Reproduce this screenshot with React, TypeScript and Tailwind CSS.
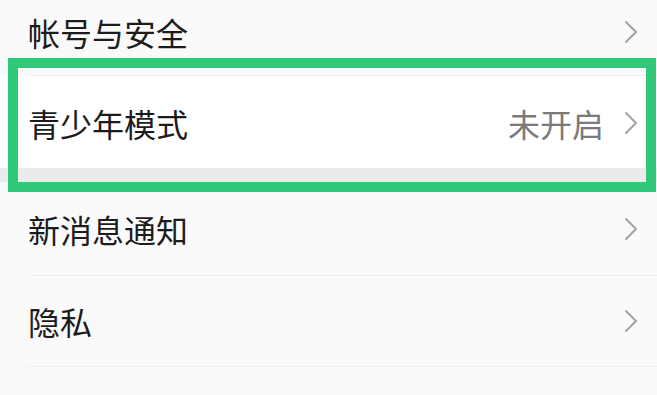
import React from "react";

const font = { fontFamily: '"Noto Sans CJK SC", "Noto Sans", sans-serif' };

function Chevron() {
  return (
    <svg width="14" height="24" viewBox="0 0 14 24" className="shrink-0">
      <path d="M2 2 L12 12 L2 22" fill="none" stroke="#a3a3a3" strokeWidth="2" strokeLinecap="round" strokeLinejoin="round" />
    </svg>
  );
}

function Row({ label, value, h, pad, divider, bg }: { label: string; value?: string; h: string; pad?: string; divider?: boolean; bg: string }) {
  return (
    <div className={`relative flex items-center pl-[28px] pr-[19px] ${h} ${bg}`}>
      <div className={`flex flex-1 items-center ${pad ?? ""}`}>
        <span className="flex-1 text-[32px] leading-none text-[#1c1c1c]">{label}</span>
        {value && <span className="mr-[20px] text-[32px] leading-none text-[#7a7a7a]">{value}</span>}
        <Chevron />
      </div>
      {divider && <div className="absolute bottom-0 left-[28px] right-0 h-px bg-[#f1eef3]" />}
    </div>
  );
}

export default function App() {
  return (
    <div className="relative h-[395px] w-[657px] overflow-hidden bg-[#fafafa]" style={font}>
      <Row label="帐号与安全" h="h-[76px]" pad="pb-[13px]" divider bg="bg-[#fafafa]" />
      <Row label="青少年模式" value="未开启" h="h-[92px]" pad="pt-[1px]" bg="bg-white" />
      <div className="h-[14px] bg-[#ebebeb]" />
      <Row label="新消息通知" h="h-[94px]" pad="pb-[1px]" divider bg="bg-[#fafafa]" />
      <Row label="隐私" h="h-[91px]" pad="pb-[1px]" divider bg="bg-[#fafafa]" />
      <div className="absolute left-[8px] top-[58px] h-[134px] w-[648px] border-[10px] border-[#30c97a]" />
    </div>
  );
}
